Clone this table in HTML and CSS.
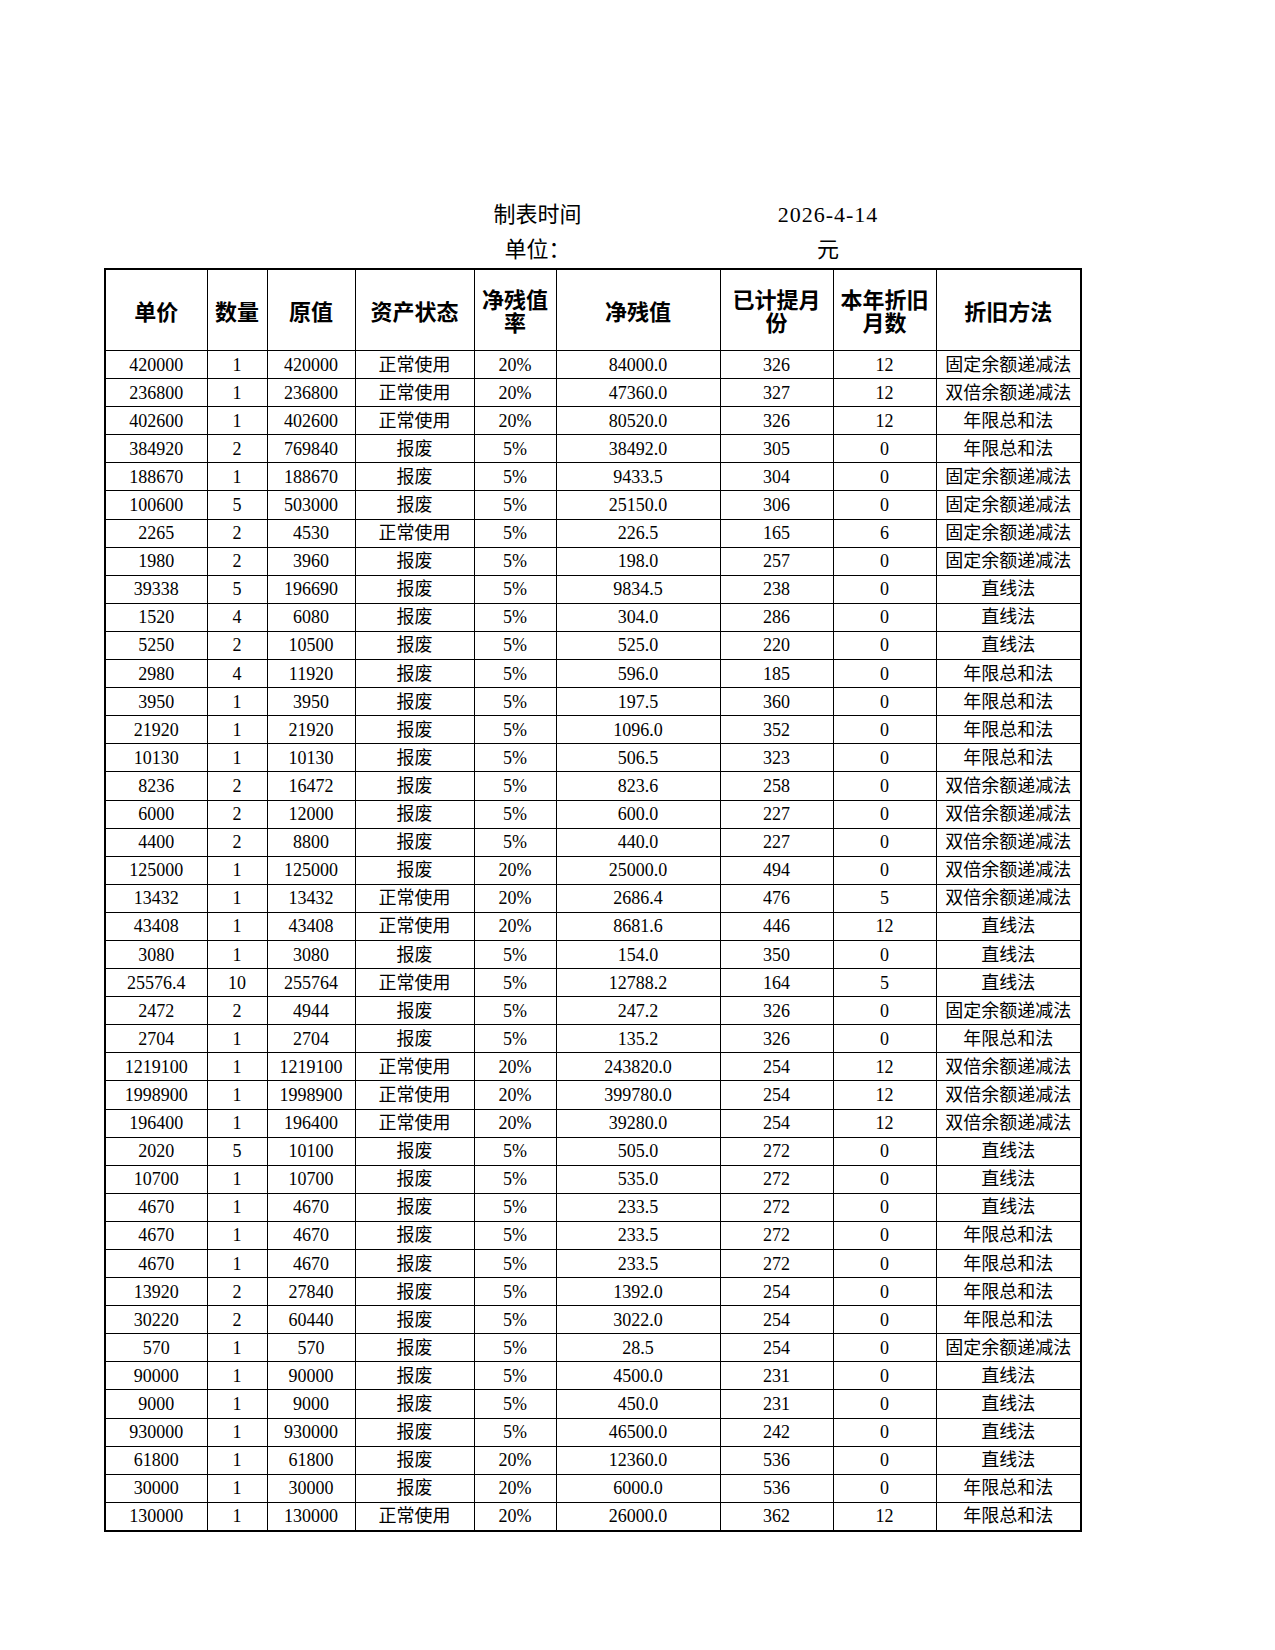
FILE: index.html
```html
<!DOCTYPE html>
<html lang="zh-CN">
<head>
<meta charset="utf-8">
<title>固定资产折旧表</title>
<link rel="stylesheet" href="styles.css">
</head>
<body>
<div class="page">
<table class="sheet">
<colgroup>
<col class="c1"><col class="c2"><col class="c3"><col class="c4"><col class="c5"><col class="c6"><col class="c7"><col class="c8"><col class="c9">
</colgroup>
<thead>
<tr class="meta meta1"><td colspan="3"></td><td colspan="3">制表时间</td><td colspan="2" class="date">2026-4-14</td><td></td></tr>
<tr class="meta meta2"><td colspan="3"></td><td colspan="3">单位：</td><td colspan="2">元</td><td></td></tr>
<tr class="head">
<th>单价</th><th>数量</th><th>原值</th><th>资产状态</th><th>净残值<br>率</th><th>净残值</th><th>已计提月<br>份</th><th>本年折旧<br>月数</th><th>折旧方法</th>
</tr>
</thead>
<tbody>
<tr><td>420000</td><td>1</td><td>420000</td><td>正常使用</td><td>20%</td><td>84000.0</td><td>326</td><td>12</td><td>固定余额递减法</td></tr>
<tr><td>236800</td><td>1</td><td>236800</td><td>正常使用</td><td>20%</td><td>47360.0</td><td>327</td><td>12</td><td>双倍余额递减法</td></tr>
<tr><td>402600</td><td>1</td><td>402600</td><td>正常使用</td><td>20%</td><td>80520.0</td><td>326</td><td>12</td><td>年限总和法</td></tr>
<tr><td>384920</td><td>2</td><td>769840</td><td>报废</td><td>5%</td><td>38492.0</td><td>305</td><td>0</td><td>年限总和法</td></tr>
<tr><td>188670</td><td>1</td><td>188670</td><td>报废</td><td>5%</td><td>9433.5</td><td>304</td><td>0</td><td>固定余额递减法</td></tr>
<tr><td>100600</td><td>5</td><td>503000</td><td>报废</td><td>5%</td><td>25150.0</td><td>306</td><td>0</td><td>固定余额递减法</td></tr>
<tr><td>2265</td><td>2</td><td>4530</td><td>正常使用</td><td>5%</td><td>226.5</td><td>165</td><td>6</td><td>固定余额递减法</td></tr>
<tr><td>1980</td><td>2</td><td>3960</td><td>报废</td><td>5%</td><td>198.0</td><td>257</td><td>0</td><td>固定余额递减法</td></tr>
<tr><td>39338</td><td>5</td><td>196690</td><td>报废</td><td>5%</td><td>9834.5</td><td>238</td><td>0</td><td>直线法</td></tr>
<tr><td>1520</td><td>4</td><td>6080</td><td>报废</td><td>5%</td><td>304.0</td><td>286</td><td>0</td><td>直线法</td></tr>
<tr><td>5250</td><td>2</td><td>10500</td><td>报废</td><td>5%</td><td>525.0</td><td>220</td><td>0</td><td>直线法</td></tr>
<tr><td>2980</td><td>4</td><td>11920</td><td>报废</td><td>5%</td><td>596.0</td><td>185</td><td>0</td><td>年限总和法</td></tr>
<tr><td>3950</td><td>1</td><td>3950</td><td>报废</td><td>5%</td><td>197.5</td><td>360</td><td>0</td><td>年限总和法</td></tr>
<tr><td>21920</td><td>1</td><td>21920</td><td>报废</td><td>5%</td><td>1096.0</td><td>352</td><td>0</td><td>年限总和法</td></tr>
<tr><td>10130</td><td>1</td><td>10130</td><td>报废</td><td>5%</td><td>506.5</td><td>323</td><td>0</td><td>年限总和法</td></tr>
<tr><td>8236</td><td>2</td><td>16472</td><td>报废</td><td>5%</td><td>823.6</td><td>258</td><td>0</td><td>双倍余额递减法</td></tr>
<tr><td>6000</td><td>2</td><td>12000</td><td>报废</td><td>5%</td><td>600.0</td><td>227</td><td>0</td><td>双倍余额递减法</td></tr>
<tr><td>4400</td><td>2</td><td>8800</td><td>报废</td><td>5%</td><td>440.0</td><td>227</td><td>0</td><td>双倍余额递减法</td></tr>
<tr><td>125000</td><td>1</td><td>125000</td><td>报废</td><td>20%</td><td>25000.0</td><td>494</td><td>0</td><td>双倍余额递减法</td></tr>
<tr><td>13432</td><td>1</td><td>13432</td><td>正常使用</td><td>20%</td><td>2686.4</td><td>476</td><td>5</td><td>双倍余额递减法</td></tr>
<tr><td>43408</td><td>1</td><td>43408</td><td>正常使用</td><td>20%</td><td>8681.6</td><td>446</td><td>12</td><td>直线法</td></tr>
<tr><td>3080</td><td>1</td><td>3080</td><td>报废</td><td>5%</td><td>154.0</td><td>350</td><td>0</td><td>直线法</td></tr>
<tr><td>25576.4</td><td>10</td><td>255764</td><td>正常使用</td><td>5%</td><td>12788.2</td><td>164</td><td>5</td><td>直线法</td></tr>
<tr><td>2472</td><td>2</td><td>4944</td><td>报废</td><td>5%</td><td>247.2</td><td>326</td><td>0</td><td>固定余额递减法</td></tr>
<tr><td>2704</td><td>1</td><td>2704</td><td>报废</td><td>5%</td><td>135.2</td><td>326</td><td>0</td><td>年限总和法</td></tr>
<tr><td>1219100</td><td>1</td><td>1219100</td><td>正常使用</td><td>20%</td><td>243820.0</td><td>254</td><td>12</td><td>双倍余额递减法</td></tr>
<tr><td>1998900</td><td>1</td><td>1998900</td><td>正常使用</td><td>20%</td><td>399780.0</td><td>254</td><td>12</td><td>双倍余额递减法</td></tr>
<tr><td>196400</td><td>1</td><td>196400</td><td>正常使用</td><td>20%</td><td>39280.0</td><td>254</td><td>12</td><td>双倍余额递减法</td></tr>
<tr><td>2020</td><td>5</td><td>10100</td><td>报废</td><td>5%</td><td>505.0</td><td>272</td><td>0</td><td>直线法</td></tr>
<tr><td>10700</td><td>1</td><td>10700</td><td>报废</td><td>5%</td><td>535.0</td><td>272</td><td>0</td><td>直线法</td></tr>
<tr><td>4670</td><td>1</td><td>4670</td><td>报废</td><td>5%</td><td>233.5</td><td>272</td><td>0</td><td>直线法</td></tr>
<tr><td>4670</td><td>1</td><td>4670</td><td>报废</td><td>5%</td><td>233.5</td><td>272</td><td>0</td><td>年限总和法</td></tr>
<tr><td>4670</td><td>1</td><td>4670</td><td>报废</td><td>5%</td><td>233.5</td><td>272</td><td>0</td><td>年限总和法</td></tr>
<tr><td>13920</td><td>2</td><td>27840</td><td>报废</td><td>5%</td><td>1392.0</td><td>254</td><td>0</td><td>年限总和法</td></tr>
<tr><td>30220</td><td>2</td><td>60440</td><td>报废</td><td>5%</td><td>3022.0</td><td>254</td><td>0</td><td>年限总和法</td></tr>
<tr><td>570</td><td>1</td><td>570</td><td>报废</td><td>5%</td><td>28.5</td><td>254</td><td>0</td><td>固定余额递减法</td></tr>
<tr><td>90000</td><td>1</td><td>90000</td><td>报废</td><td>5%</td><td>4500.0</td><td>231</td><td>0</td><td>直线法</td></tr>
<tr><td>9000</td><td>1</td><td>9000</td><td>报废</td><td>5%</td><td>450.0</td><td>231</td><td>0</td><td>直线法</td></tr>
<tr><td>930000</td><td>1</td><td>930000</td><td>报废</td><td>5%</td><td>46500.0</td><td>242</td><td>0</td><td>直线法</td></tr>
<tr><td>61800</td><td>1</td><td>61800</td><td>报废</td><td>20%</td><td>12360.0</td><td>536</td><td>0</td><td>直线法</td></tr>
<tr><td>30000</td><td>1</td><td>30000</td><td>报废</td><td>20%</td><td>6000.0</td><td>536</td><td>0</td><td>年限总和法</td></tr>
<tr><td>130000</td><td>1</td><td>130000</td><td>正常使用</td><td>20%</td><td>26000.0</td><td>362</td><td>12</td><td>年限总和法</td></tr>
</tbody>
</table>
</div>
</body>
</html>
```

FILE: styles.css
```css
html, body {
  margin: 0;
  padding: 0;
  background: #fff;
  color: #000;
}

.page {
  padding: 197px 0 0 104px;
}

.sheet {
  border-collapse: collapse;
  table-layout: fixed;
  width: 976px;
  font-family: "Liberation Serif", "Noto Sans CJK SC", serif;
}

.c1 { width: 102px; }
.c2 { width: 60px; }
.c3 { width: 88px; }
.c4 { width: 119px; }
.c5 { width: 82px; }
.c6 { width: 164px; }
.c7 { width: 113px; }
.c8 { width: 103px; }
.c9 { width: 145px; }

.meta td {
  border: none;
  padding: 0;
  text-align: center;
  font-size: 22px;
  line-height: 26px;
  vertical-align: middle;
  font-weight: 400;
}

.meta .date {
  letter-spacing: 1px;
}

.meta1 td { height: 35px; }
.meta2 td { height: 36px; }

.head th {
  height: 80px;
  padding: 0;
  font-family: "Noto Sans CJK SC", sans-serif;
  font-weight: 700;
  font-size: 22px;
  line-height: 23px;
  text-align: center;
  vertical-align: middle;
  border: 1px solid #000;
  border-top: 2px solid #000;
}

tbody td {
  height: 27.1px;
  padding: 0;
  font-size: 18px;
  line-height: 20px;
  text-align: center;
  vertical-align: middle;
  border: 1px solid #000;
  white-space: nowrap;
}

.head th:first-child,
tbody td:first-child {
  border-left: 2px solid #000;
}

.head th:last-child,
tbody td:last-child {
  border-right: 2px solid #000;
}

tbody tr:last-child td {
  border-bottom: 2px solid #000;
}
```
